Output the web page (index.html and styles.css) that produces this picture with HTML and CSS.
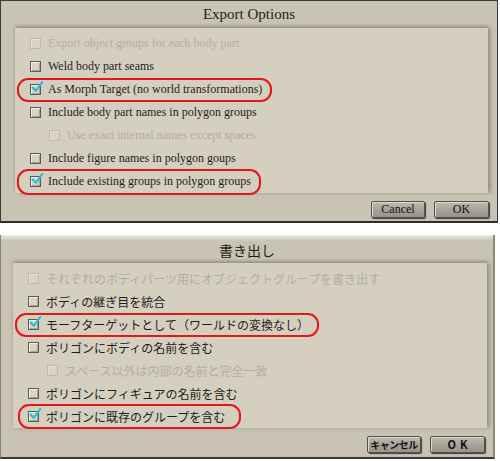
FILE: index.html
```html
<!DOCTYPE html>
<html lang="en">
<head>
  <meta charset="UTF-8">
  <title>Export Options</title>
  <link rel="stylesheet" href="styles.css">
</head>
<body>
  <div class="dialog dialog-en">
    <div class="dialog-title">Export Options</div>
    <div class="panel">
      <div class="row disabled"><span class="box"></span>Export object groups for each body part</div>
      <div class="row"><span class="box"></span>Weld body part seams</div>
      <div class="row marked"><span class="mark"><span class="box checked"><svg viewBox="0 0 16 16"><path d="M2 8 L6 12 L14 1" /></svg></span>As Morph Target (no world transformations)</span></div>
      <div class="row"><span class="box"></span>Include body part names in polygon groups</div>
      <div class="row indent disabled"><span class="box"></span>Use exact internal names except spaces</div>
      <div class="row"><span class="box"></span>Include figure names in polygon goups</div>
      <div class="row marked"><span class="mark"><span class="box checked"><svg viewBox="0 0 16 16"><path d="M2 8 L6 12 L14 1" /></svg></span>Include existing groups in polygon groups</span></div>
    </div>
    <div class="footer">
      <button class="btn">Cancel</button>
      <button class="btn">OK</button>
    </div>
  </div>

  <div class="dialog dialog-ja">
    <div class="dialog-title">書き出し</div>
    <div class="panel">
      <div class="row disabled"><span class="box"></span>それぞれのボディパーツ用にオブジェクトグループを書き出す</div>
      <div class="row"><span class="box"></span>ボディの継ぎ目を統合</div>
      <div class="row marked"><span class="mark"><span class="box checked"><svg viewBox="0 0 16 16"><path d="M2 8 L6 12 L14 1" /></svg></span>モーフターゲットとして（ワールドの変換なし）</span></div>
      <div class="row"><span class="box"></span>ポリゴンにボディの名前を含む</div>
      <div class="row indent disabled"><span class="box"></span>スペース以外は内部の名前と完全一致</div>
      <div class="row"><span class="box"></span>ポリゴンにフィギュアの名前を含む</div>
      <div class="row marked"><span class="mark"><span class="box checked"><svg viewBox="0 0 16 16"><path d="M2 8 L6 12 L14 1" /></svg></span>ポリゴンに既存のグループを含む</span></div>
    </div>
    <div class="footer">
      <button class="btn">キャンセル</button>
      <button class="btn btn-ok">OK</button>
    </div>
  </div>
</body>
</html>
```

FILE: styles.css
```css
html, body {
  margin: 0;
  padding: 0;
  background: #ffffff;
}

body {
  width: 500px;
  height: 461px;
  overflow: hidden;
}

.dialog {
  background: #c9c3b4;
  box-sizing: border-box;
  color: #1e1d1a;
}

.dialog-en {
  width: 498px;
  height: 223px;
  border: 1px solid #3c3a35;
  border-bottom: 2px solid #2e2c28;
  font-family: "Liberation Serif", "Times New Roman", serif;
  font-size: 12px;
}

.dialog-ja {
  width: 495px;
  height: 224px;
  margin-top: 12px;
  border-left: 1px solid #8a857a;
  border-right: 2px solid #8d887d;
  border-bottom: 2px solid #3a3833;
  background: linear-gradient(#ece9e2 0, #c9c3b4 6px);
  font-family: "Noto Sans CJK JP", "Noto Sans", sans-serif;
  font-size: 12px;
}

.dialog-title {
  height: 27px;
  display: flex;
  align-items: center;
  justify-content: center;
  font-size: 15px;
  padding-bottom: 1px;
  box-sizing: border-box;
}

.dialog-ja .dialog-title {
  height: 28px;
  font-size: 14px;
  padding-top: 3px;
}

.panel {
  background: #d5cfc0;
  margin: 0 9px 0 14px;
  padding: 4px 0 0;
  height: 165px;
  box-sizing: border-box;
  box-shadow: 0 -2px 3px rgba(90, 84, 70, 0.35), 3px 0 4px rgba(90, 84, 70, 0.35);
}

.dialog-ja .panel {
  margin: 0 6px 0 12px;
}

.row {
  height: 23px;
  display: flex;
  align-items: center;
  padding-left: 15px;
  white-space: nowrap;
}

.row.indent {
  padding-left: 34px;
}

.row.disabled {
  color: #b3ad9f;
}

.row.marked {
  padding-left: 2px;
}

.mark {
  display: inline-flex;
  align-items: center;
  height: 20px;
  padding: 0 8px 0 11px;
  border: 2px solid #e8141b;
  border-radius: 11px;
}

.dialog-en .row.marked:last-child .mark {
  height: 22px;
}

.dialog-ja .row.marked:last-child .mark {
  height: 21px;
  margin-left: 3px;
  padding-left: 8px;
  padding-right: 14px;
}

.box {
  position: relative;
  width: 9px;
  height: 9px;
  margin-right: 7px;
  border: 1px solid #5e5a52;
  background: #d9d3c5;
  box-shadow: inset 1px 1px 0 #f2efe8, inset -1px -1px 0 #a9a496;
  flex: none;
}

.disabled .box {
  border-color: #bfb9ab;
  box-shadow: inset 1px 1px 0 #e6e2d8;
}

.box svg {
  position: absolute;
  left: 0;
  top: -4px;
  width: 13px;
  height: 13px;
  fill: none;
  stroke: #16c4df;
  stroke-width: 2.6;
  stroke-linecap: round;
  stroke-linejoin: round;
}

.footer {
  height: 30px;
  display: flex;
  align-items: center;
  justify-content: flex-end;
  gap: 9px;
  padding-right: 8px;
  padding-top: 2px;
  box-sizing: border-box;
}

.btn {
  width: 54px;
  height: 17px;
  padding: 0;
  white-space: nowrap;
  font-family: "Liberation Serif", "Times New Roman", serif;
  font-size: 12px;
  color: #111;
  background: linear-gradient(#bdbab0, #a3a096 60%, #97948a);
  border: 1px solid #55524b;
  border-radius: 2px;
  box-shadow: inset 1px 1px 0 #dcd9d0, 1px 1px 1px #3e3c37;
}

.btn + .btn {
  width: 55px;
}

.dialog-ja .btn {
  font-family: "Noto Sans CJK JP", "Noto Sans", sans-serif;
  font-size: 10px;
  font-weight: bold;
  letter-spacing: -0.5px;
  line-height: 15px;
}

.dialog-ja .btn-ok {
  font-size: 11px;
  letter-spacing: 4px;
  text-indent: 4px;
}
```
